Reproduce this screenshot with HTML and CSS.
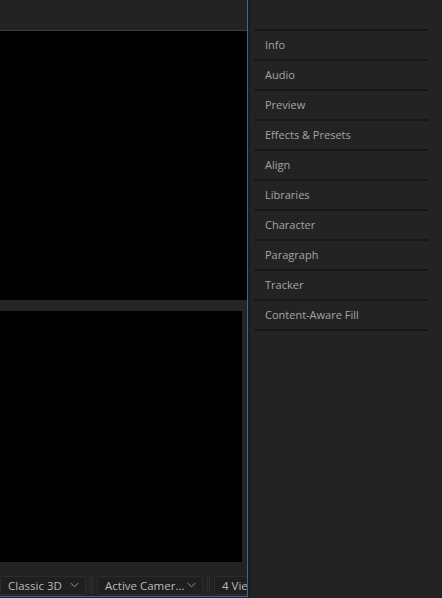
FILE: index.html
```html
<!DOCTYPE html>
<html>
<head>
<meta charset="utf-8">
<link rel="stylesheet" href="styles.css">
</head>
<body>
<div class="app">
  <div class="left">
    <div class="topbar"></div>
    <div class="viewport-top"></div>
    <div class="strip"></div>
    <div class="lower">
      <div class="viewport-bottom"></div>
    </div>
    <div class="toolbar">
      <div class="dd dd-renderer"><span class="dd-label">Classic 3D</span><svg class="chev" viewBox="0 0 10 6"><path d="M1 1 L5 5 L9 1" fill="none" stroke="#9a9a9a" stroke-width="1.1"/></svg></div>
      <div class="sep"></div>
      <div class="dd dd-camera"><span class="dd-label">Active Camer…</span><svg class="chev" viewBox="0 0 10 6"><path d="M1 1 L5 5 L9 1" fill="none" stroke="#9a9a9a" stroke-width="1.1"/></svg></div>
      <div class="sep"></div>
      <div class="dd dd-views"><span class="dd-label">4 Views</span></div>
    </div>
  </div>
  <div class="gutter"></div>
  <div class="right">
    <ul class="panels">
      <li>Info</li>
      <li>Audio</li>
      <li>Preview</li>
      <li>Effects &amp; Presets</li>
      <li>Align</li>
      <li>Libraries</li>
      <li>Character</li>
      <li>Paragraph</li>
      <li>Tracker</li>
      <li>Content-Aware Fill</li>
    </ul>
  </div>
</div>
</body>
</html>
```

FILE: styles.css
```css
html, body {
  margin: 0;
  padding: 0;
  background: #232323;
  width: 442px;
  height: 598px;
  overflow: hidden;
  font-family: "Open Sans", "Noto Sans", sans-serif;
}

.app {
  display: flex;
  width: 442px;
  height: 598px;
}

.left {
  width: 247px;
  height: 596px;
  flex: none;
  display: flex;
  flex-direction: column;
  border-right: 1px solid #3568a0;
  border-bottom: 1px solid #3568a0;
  background: #232323;
  overflow: hidden;
}

.topbar {
  height: 30px;
  flex: none;
  background: #232323;
  border-bottom: 1px solid #3c3c3c;
}

.viewport-top {
  height: 269px;
  flex: none;
  background: #000;
}

.strip {
  height: 11px;
  flex: none;
  background: #252525;
}

.lower {
  height: 251px;
  flex: none;
  display: flex;
  padding-right: 5px;
  background: #252525;
}

.viewport-bottom {
  flex: 1;
  background: #000;
}

.toolbar {
  flex: 1;
  display: flex;
  align-items: center;
  gap: 4px;
  padding: 12px 0 0 0;
  box-sizing: border-box;
  white-space: nowrap;
}

.dd {
  height: 19px;
  box-sizing: border-box;
  flex: none;
  display: flex;
  align-items: center;
  justify-content: space-between;
  background: #1f1f1f;
  border: 1px solid #2c2c2c;
  border-radius: 2px;
  color: #b9b9b9;
  font-size: 11.5px;
  padding: 0 6px 0 7px;
}

.dd-renderer {
  width: 86px;
}

.dd-camera {
  width: 106px;
}

.dd-views {
  width: 60px;
}

.chev {
  width: 9px;
  height: 6px;
}

.sep {
  width: 3px;
  height: 18px;
  flex: none;
  border-left: 1px solid #2e2e2e;
  border-right: 1px solid #2e2e2e;
  box-sizing: border-box;
}

.gutter {
  width: 2px;
  flex: none;
  background: #1c1c1c;
}

.right {
  flex: 1;
  background: #232323;
  padding: 29px 14px 0 4px;
}

.panels {
  list-style: none;
  margin: 0;
  padding: 0;
  border-top: 2px solid #171717;
}

.panels li {
  box-sizing: border-box;
  border-bottom: 2px solid #171717;
  display: flex;
  align-items: center;
  padding: 0 0 2px 11px;
  height: 30px;
  color: #a3a3a3;
  font-size: 11px;
}
```
